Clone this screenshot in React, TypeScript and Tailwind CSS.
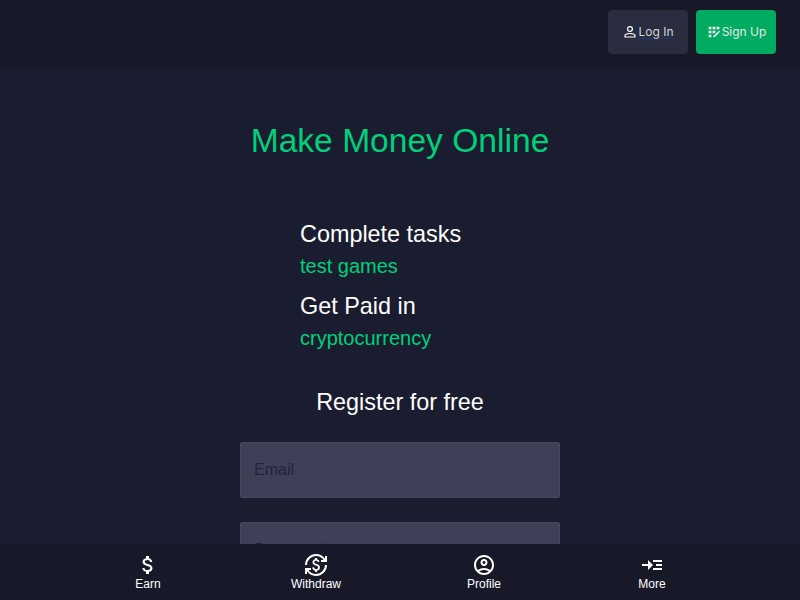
import React from 'react';
import {
  MdAppRegistration,
  MdAttachMoney,
  MdCurrencyExchange,
  MdOutlineAccountCircle,
  MdReadMore,
} from 'react-icons/md';

const PersonIcon = () => (
  <svg width="16" height="16" viewBox="0 0 16 16" fill="none" stroke="white" strokeWidth="1.2">
    <circle cx="8" cy="5" r="2.4" />
    <path d="M3 13v-1.300c0-1.300 2.500-2.200 5-2.200s5 .9 5 2.200V13z" />
  </svg>
);

const tabs = [
  { label: 'Earn', icon: <MdAttachMoney size={24} /> },
  { label: 'Withdraw', icon: <MdCurrencyExchange size={24} /> },
  { label: 'Profile', icon: <MdOutlineAccountCircle size={24} /> },
  { label: 'More', icon: <MdReadMore size={24} /> },
];

export default function App() {
  return (
    <div className="h-[600px] overflow-hidden flex flex-col bg-[#1a1c2f] font-['Liberation_Sans',sans-serif]">
      <header className="relative h-[65px] shrink-0 bg-[#171929] shadow-md flex items-start justify-end gap-2 pt-2.5 pr-6 font-['Inter',sans-serif]">
        <button className="w-20 h-11 rounded bg-[#2a2c40] flex items-center justify-center text-xs text-[#d1d5db]">
          <PersonIcon />
          <span className="underline decoration-[#1e3a6e] underline-offset-2">Log In</span>
        </button>
        <button className="w-20 h-11 rounded bg-[#00ac5f] flex items-center justify-center text-xs text-[#e5e7eb]">
          <MdAppRegistration size={16} color="white" />
          <span className="underline decoration-[#10a080] underline-offset-2">Sign Up</span>
        </button>
      </header>

      <main className="flex-1 min-h-0 overflow-hidden flex flex-col items-center">
        <h1 className="mt-[53px] text-[33.6px] leading-[46px] text-[#00d07a]">Make Money Online</h1>

        <div className="w-[200px] mt-[52px] text-[23.4px]">
          <p className="leading-[36px] text-white">Complete tasks</p>
          <p className="leading-[28px] text-[20px] text-[#00d07a]">test games</p>
          <p className="mt-2 leading-[36px] text-white">Get Paid in</p>
          <p className="leading-[28px] text-[20px] text-[#00d07a]">cryptocurrency</p>
        </div>

        <h2 className="mt-8 text-[23.4px] leading-[36px] text-white">Register for free</h2>

        <input
          placeholder="Email"
          className="mt-[22px] w-80 h-14 shrink-0 px-[13px] rounded-[2px] border border-[#46465f] bg-[#3f3f58] text-base placeholder:text-[#23243a]"
        />
        <input
          placeholder="Password"
          className="mt-6 w-80 h-14 shrink-0 px-[13px] rounded-[2px] border border-[#46465f] bg-[#3f3f58] text-base placeholder:text-[#23243a]"
        />
      </main>

      <nav className="h-14 shrink-0 bg-[#171929] grid grid-cols-4 px-16">
        {tabs.map((tab) => (
          <div key={tab.label} className="flex flex-col items-center pt-[9px] text-xs leading-[14px] text-white">
            {tab.icon}
            <span>{tab.label}</span>
          </div>
        ))}
      </nav>
    </div>
  );
}
